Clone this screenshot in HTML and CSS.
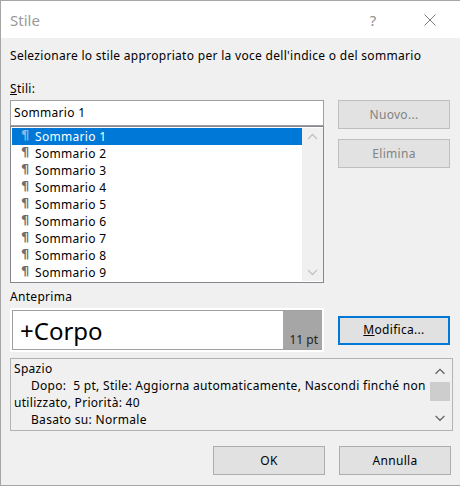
FILE: index.html
```html
<!DOCTYPE html>
<html lang="it">
<head>
<meta charset="utf-8">
<title>Stile</title>
<link rel="stylesheet" href="styles.css">
</head>
<body>
<div class="window">
  <div class="titlebar">
    <span class="title">Stile</span>
    <span class="help">?</span>
    <span class="close"><svg width="12" height="12" viewBox="0 0 12 12"><path d="M0.5 0.5 L11.5 11.5 M11.5 0.5 L0.5 11.5" stroke="#7a7a7a" stroke-width="1" fill="none"/></svg></span>
  </div>
  <div class="content">
    <div class="intro">Selezionare lo stile appropriato per la voce dell'indice o del sommario</div>
    <div class="top-row">
      <div class="styles-col">
        <div class="label"><u>S</u>tili:</div>
        <div class="input">Sommario 1</div>
        <div class="listbox">
          <ul class="items">
            <li class="item selected"><span class="pil">¶</span>Sommario 1</li>
            <li class="item"><span class="pil">¶</span>Sommario 2</li>
            <li class="item"><span class="pil">¶</span>Sommario 3</li>
            <li class="item"><span class="pil">¶</span>Sommario 4</li>
            <li class="item"><span class="pil">¶</span>Sommario 5</li>
            <li class="item"><span class="pil">¶</span>Sommario 6</li>
            <li class="item"><span class="pil">¶</span>Sommario 7</li>
            <li class="item"><span class="pil">¶</span>Sommario 8</li>
            <li class="item"><span class="pil">¶</span>Sommario 9</li>
          </ul>
          <div class="vscroll light">
            <svg class="arrow" width="21" height="17" viewBox="0 0 21 17"><polyline points="6,11 10.5,6.5 15,11" fill="none" stroke="#c2c2c2" stroke-width="1.3"/></svg>
            <svg class="arrow" width="21" height="17" viewBox="0 0 21 17"><polyline points="6,6 10.5,10.5 15,6" fill="none" stroke="#c2c2c2" stroke-width="1.3"/></svg>
          </div>
        </div>
      </div>
      <div class="side-buttons">
        <div class="btn disabled">Nuovo...</div>
        <div class="btn disabled">Elimina</div>
      </div>
    </div>
    <div class="label label-preview">Anteprima</div>
    <div class="preview-row">
      <div class="preview">
        <div class="preview-inner">
          <span class="sample">+Corpo</span>
          <span class="size">11 pt</span>
        </div>
      </div>
      <div class="btn default"><span><u>M</u>odifica...</span></div>
    </div>
    <div class="desc">
      <div class="desc-text">
        <div class="line">Spazio</div>
        <div class="line indent">Dopo:&nbsp; 5 pt, Stile: Aggiorna automaticamente, Nascondi finché non<br>utilizzato, Priorità: 40</div>
        <div class="line indent">Basato su: Normale</div>
      </div>
      <div class="vscroll dark">
        <svg class="arrow" width="20" height="22" viewBox="0 0 20 22"><polyline points="5.5,15 10,10.5 14.5,15" fill="none" stroke="#606060" stroke-width="1.3"/></svg>
        <div class="thumb"></div>
        <svg class="arrow" width="20" height="22" viewBox="0 0 20 22"><polyline points="5.5,8 10,12.5 14.5,8" fill="none" stroke="#606060" stroke-width="1.3"/></svg>
      </div>
    </div>
    <div class="footer">
      <div class="btn">OK</div>
      <div class="btn">Annulla</div>
    </div>
  </div>
</div>
</body>
</html>
```
FILE: styles.css
```css
* { box-sizing: border-box; }
html, body { margin: 0; padding: 0; }
body {
  font-family: "Noto Sans", "Liberation Sans", sans-serif;
  font-size: 12px;
  letter-spacing: 0.3px;
  color: #000;
  background: #f0f0f0;
}
.window {
  width: 460px;
  height: 486px;
  border-top: 1px solid #a6a6a6;
  border-left: 1px solid #a6a6a6;
  border-bottom: 1px solid #a6a6a6;
  background: #f0f0f0;
  overflow: hidden;
}
.titlebar {
  height: 37px;
  background: #fff;
  display: flex;
  align-items: center;
  padding-left: 9px;
  letter-spacing: 0;
}
.title {
  font-size: 15px;
  color: #9a9a9a;
}
.help {
  margin-left: auto;
  width: 14px;
  text-align: center;
  font-size: 15px;
  color: #909090;
}
.close {
  margin-left: 44px;
  margin-right: 24px;
  width: 12px;
  height: 12px;
  display: flex;
}
.content {
  padding: 0 7px 0 9px;
}
.intro {
  margin-top: 10px;
  line-height: 16px;
  height: 16px;
  white-space: nowrap;
}
.top-row {
  display: flex;
  gap: 14px;
  margin-top: 17px;
}
.styles-col {
  width: 314px;
}
.label {
  line-height: 16px;
  height: 16px;
}
.input {
  margin-top: 3px;
  height: 26px;
  border: 1px solid #a0a0a0;
  background: #fff;
  padding-left: 3px;
  line-height: 23px;
}
.listbox {
  height: 157px;
  border: 1px solid #828790;
  background: #fff;
  display: flex;
  padding: 1px 0 1px 1px;
}
.items {
  list-style: none;
  margin: 0;
  padding: 0;
  flex: 1;
}
.item {
  height: 17px;
  line-height: 17px;
  padding-left: 9px;
  white-space: nowrap;
}
.pil {
  display: inline-block;
  width: 14px;
  font-family: "DejaVu Sans", sans-serif;
  font-size: 13px;
  font-weight: bold;
  letter-spacing: 0;
  color: #6e6e6e;
  vertical-align: top;
  line-height: 14px;
}
.item.selected {
  background: #0078d7;
  color: #fff;
}
.item.selected .pil { color: #8fb8e0; }
.vscroll {
  background: #f0f0f0;
  display: flex;
  flex-direction: column;
  justify-content: space-between;
}
.vscroll.light { width: 21px; }
.arrow { display: block; }
.side-buttons {
  width: 112px;
  padding-top: 19px;
  display: flex;
  flex-direction: column;
  gap: 10px;
}
.btn {
  width: 112px;
  height: 29px;
  border: 1px solid #adadad;
  background: #e1e1e1;
  display: flex;
  align-items: center;
  justify-content: center;
  line-height: 16px;
}
.btn.disabled {
  color: #838383;
  border-color: #bfbfbf;
  background: #e2e2e2;
}
.btn.default {
  border: 2px solid #0078d7;
}
.label-preview {
  margin-top: 6px;
}
.preview-row {
  margin-top: 3px;
  display: flex;
  align-items: center;
  gap: 14px;
}
.preview {
  width: 314px;
  height: 44px;
  background: #fff;
  padding: 2px;
}
.preview-inner {
  height: 100%;
  border: 1px solid #a0a0a0;
  border-right: none;
  display: flex;
}
.sample {
  flex: 1;
  font-size: 24px;
  letter-spacing: 0;
  line-height: 40px;
  padding-left: 7px;
}
.size {
  width: 39px;
  background: #a6a6a6;
  display: flex;
  align-items: flex-end;
  justify-content: flex-end;
  padding: 0 4px 1px 0;
  color: #222;
  line-height: 16px;
  letter-spacing: 0;
}
.desc {
  margin-top: 6px;
  height: 73px;
  border: 1px solid #b4b4b4;
  background: #f0f0f0;
  display: flex;
  padding-right: 2px;
}
.desc-text {
  flex: 1;
  padding: 1px 0 0 3px;
  overflow: hidden;
}
.line {
  line-height: 17px;
  white-space: nowrap;
}
.line.indent {
  text-indent: 17px;
}
.vscroll.dark {
  width: 20px;
  justify-content: flex-start;
}
.thumb {
  height: 20px;
  background: #cdcdcd;
  margin: 1px 0 7px;
}
.footer {
  margin-top: 15px;
  display: flex;
  justify-content: flex-end;
  gap: 14px;
  padding-right: 2px;
}
```
